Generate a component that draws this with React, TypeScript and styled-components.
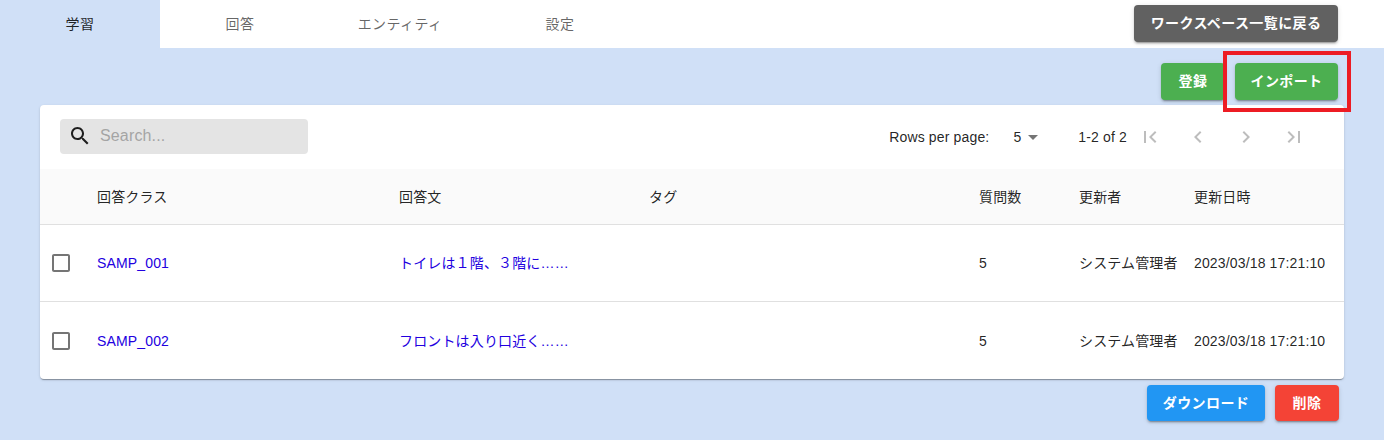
import styled, { createGlobalStyle } from "styled-components";

const rows = [
  { id: "SAMP_001", text: "トイレは１階、３階に……" },
  { id: "SAMP_002", text: "フロントは入り口近く……" },
];

const GlobalStyle = createGlobalStyle`
  html, body {
    margin: 0;
    padding: 0;
    background: #d0e0f7;
  }
  body {
    font-family: "Liberation Sans", "Noto Sans CJK JP", sans-serif;
    font-size: 14px;
    letter-spacing: 0.15px;
  }
`;

const App = () => {
  return (
    <Page>
      <GlobalStyle />
      <TopBar>
        <Tab active>学習</Tab>
        <Tab>回答</Tab>
        <Tab>エンティティ</Tab>
        <Tab>設定</Tab>
        <BackButton>ワークスペース一覧に戻る</BackButton>
      </TopBar>
      <ActionRow>
        <ActionButton color="#4caf50" w={64}>
          登録
        </ActionButton>
        <ImportWrap>
          <ActionButton color="#4caf50" w={103}>
            インポート
          </ActionButton>
          <Highlight />
        </ImportWrap>
      </ActionRow>
      <Card>
        <Toolbar>
          <SearchBox>
            <SearchIcon viewBox="0 0 24 24">
              <path d="M15.5 14h-.79l-.28-.27C15.41 12.59 16 11.11 16 9.5 16 5.91 13.09 3 9.5 3S3 5.91 3 9.5 5.91 16 9.5 16c1.61 0 3.09-.59 4.23-1.57l.27.28v.79l5 4.99L20.49 19l-4.99-5zm-6 0C7.01 14 5 11.99 5 9.5S7.01 5 9.5 5 14 7.01 14 9.5 11.99 14 9.5 14z" />
            </SearchIcon>
            <SearchText>Search...</SearchText>
          </SearchBox>
          <Pagination>
            <RowsLabel>Rows per page:</RowsLabel>
            <RowsValue>5</RowsValue>
            <Caret />
            <PageInfo>1-2 of 2</PageInfo>
            <PagerIcons>
              <PagerIcon viewBox="0 0 24 24">
                <path d="M18.41 16.59 13.82 12l4.59-4.59L17 6l-6 6 6 6zM6 6h2v12H6z" />
              </PagerIcon>
              <PagerIcon viewBox="0 0 24 24">
                <path d="M15.41 7.41 14 6l-6 6 6 6 1.41-1.41L10.83 12z" />
              </PagerIcon>
              <PagerIcon viewBox="0 0 24 24">
                <path d="M10 6 8.59 7.41 13.17 12l-4.58 4.59L10 18l6-6z" />
              </PagerIcon>
              <PagerIcon viewBox="0 0 24 24">
                <path d="M5.59 7.41 10.18 12l-4.59 4.59L7 18l6-6-6-6zM16 6h2v12h-2z" />
              </PagerIcon>
            </PagerIcons>
          </Pagination>
        </Toolbar>
        <HeaderRow>
          <span />
          <HeaderCell>回答クラス</HeaderCell>
          <HeaderCell>回答文</HeaderCell>
          <HeaderCell>タグ</HeaderCell>
          <HeaderCell>質問数</HeaderCell>
          <HeaderCell>更新者</HeaderCell>
          <HeaderCell>更新日時</HeaderCell>
        </HeaderRow>
        {rows.map((row) => (
          <DataRow key={row.id}>
            <CheckCell>
              <CheckIcon viewBox="0 0 24 24">
                <path d="M19 5v14H5V5h14m0-2H5c-1.1 0-2 .9-2 2v14c0 1.1.9 2 2 2h14c1.1 0 2-.9 2-2V5c0-1.1-.9-2-2-2z" />
              </CheckIcon>
            </CheckCell>
            <LinkText>{row.id}</LinkText>
            <LinkText cjk>{row.text}</LinkText>
            <span />
            <span>5</span>
            <JapaneseCell>システム管理者</JapaneseCell>
            <span>2023/03/18 17:21:10</span>
          </DataRow>
        ))}
      </Card>
      <BottomRow>
        <BottomButton color="#2196f3" w={118}>
          ダウンロード
        </BottomButton>
        <BottomButton color="#f44336" w={64}>
          削除
        </BottomButton>
      </BottomRow>
    </Page>
  );
};

const Page = styled.div`
  width: 1384px;
  height: 440px;
  overflow: hidden;
  background: #d0e0f7;
`;

const TopBar = styled.div`
  display: flex;
  align-items: flex-start;
  height: 48px;
  padding-right: 46px;
  background: #fff;
`;

const Tab = styled.div<{ active?: boolean }>`
  display: flex;
  justify-content: center;
  align-items: center;
  width: 160px;
  height: 48px;
  padding-bottom: 3px;
  box-sizing: border-box;
  letter-spacing: 0.4px;
  color: ${({ active }) => (active ? "rgba(0, 0, 0, 0.87)" : "rgba(0, 0, 0, 0.6)")};
  background: ${({ active }) => (active ? "#d0e0f7" : "#fff")};
`;

const Button = styled.button`
  display: flex;
  justify-content: center;
  align-items: center;
  height: 37px;
  padding: 0 0 3px;
  border: none;
  border-radius: 4px;
  color: #fff;
  font-family: inherit;
  font-size: 14px;
  font-weight: 700;
  letter-spacing: 0.4px;
  box-shadow: 0 3px 1px -2px rgba(0, 0, 0, 0.2), 0 2px 2px 0 rgba(0, 0, 0, 0.14),
    0 1px 5px 0 rgba(0, 0, 0, 0.12);
`;

const BackButton = styled(Button)`
  width: 204px;
  margin-top: 5px;
  margin-left: auto;
  background: #616161;
`;

const ActionButton = styled(Button)<{ color: string; w: number }>`
  width: ${({ w }) => `${w}px`};
  background: ${({ color }) => color};
`;

const BottomButton = styled(ActionButton)`
  height: 36px;
`;

const ActionRow = styled.div`
  display: flex;
  justify-content: flex-end;
  gap: 10px;
  height: 57px;
  padding-top: 15px;
  padding-right: 46px;
  box-sizing: border-box;
`;

const ImportWrap = styled.div`
  position: relative;
  height: 37px;
`;

const Highlight = styled.div`
  position: absolute;
  top: -12px;
  left: -12px;
  width: 128px;
  height: 61px;
  box-sizing: border-box;
  border: 4px solid #ed1c24;
  z-index: 2;
`;

const Card = styled.div`
  width: 1304px;
  height: 274px;
  margin-left: 40px;
  overflow: hidden;
  background: #fff;
  border-radius: 4px;
  box-shadow: 0 2px 1px -1px rgba(0, 0, 0, 0.2), 0 1px 1px 0 rgba(0, 0, 0, 0.14),
    0 1px 3px 0 rgba(0, 0, 0, 0.12);
`;

const Toolbar = styled.div`
  display: flex;
  justify-content: space-between;
  align-items: center;
  height: 64px;
  padding-left: 20px;
`;

const SearchBox = styled.div`
  display: flex;
  align-items: center;
  width: 248px;
  height: 35px;
  margin-top: -2px;
  background: #e4e4e4;
  border-radius: 4px;
`;

const SearchIcon = styled.svg`
  width: 24px;
  height: 24px;
  margin-left: 8px;
  fill: rgba(0, 0, 0, 0.87);
`;

const SearchText = styled.span`
  margin-left: 8px;
  color: #a4a4a4;
  font-size: 16px;
`;

const Pagination = styled.div`
  display: flex;
  align-items: center;
  color: rgba(0, 0, 0, 0.87);
  font-size: 14px;
`;

const RowsLabel = styled.span`
  margin-right: 24px;
`;

const RowsValue = styled.span``;

const Caret = styled.span`
  width: 0;
  height: 0;
  margin-left: 7px;
  margin-right: 40px;
  border-left: 5px solid transparent;
  border-right: 5px solid transparent;
  border-top: 5px solid rgba(0, 0, 0, 0.54);
`;

const PageInfo = styled.span`
  margin-right: 11px;
`;

const PagerIcons = styled.div`
  display: flex;
  gap: 24px;
  margin-right: 38px;
`;

const PagerIcon = styled.svg`
  width: 24px;
  height: 24px;
  fill: rgba(0, 0, 0, 0.26);
`;

const columns = "57px 302px 250px 330px 100px 115px 1fr";

const HeaderRow = styled.div`
  display: grid;
  grid-template-columns: ${columns};
  align-items: center;
  height: 56px;
  box-sizing: border-box;
  color: rgba(0, 0, 0, 0.87);
  background: #fafafa;
  border-bottom: 1px solid #e0e0e0;
`;

const HeaderCell = styled.span`
  padding-bottom: 2px;
`;

const DataRow = styled.div`
  display: grid;
  grid-template-columns: ${columns};
  align-items: center;
  height: 77px;
  box-sizing: border-box;
  color: rgba(0, 0, 0, 0.87);
  white-space: nowrap;
  border-bottom: 1px solid #e0e0e0;
  &:last-child {
    height: 78px;
    border-bottom: none;
  }
`;

const CheckCell = styled.div`
  display: flex;
  padding-left: 9px;
`;

const CheckIcon = styled.svg`
  width: 24px;
  height: 24px;
  fill: rgba(0, 0, 0, 0.54);
`;

const JapaneseCell = styled.span`
  padding-bottom: 2px;
`;

const LinkText = styled.span<{ cjk?: boolean }>`
  padding-bottom: ${({ cjk }) => (cjk ? "2px" : "0")};
  color: #2200e0;
`;

const BottomRow = styled.div`
  display: flex;
  justify-content: flex-end;
  gap: 10px;
  margin-top: 6px;
  padding-right: 45px;
`;

export default App;
